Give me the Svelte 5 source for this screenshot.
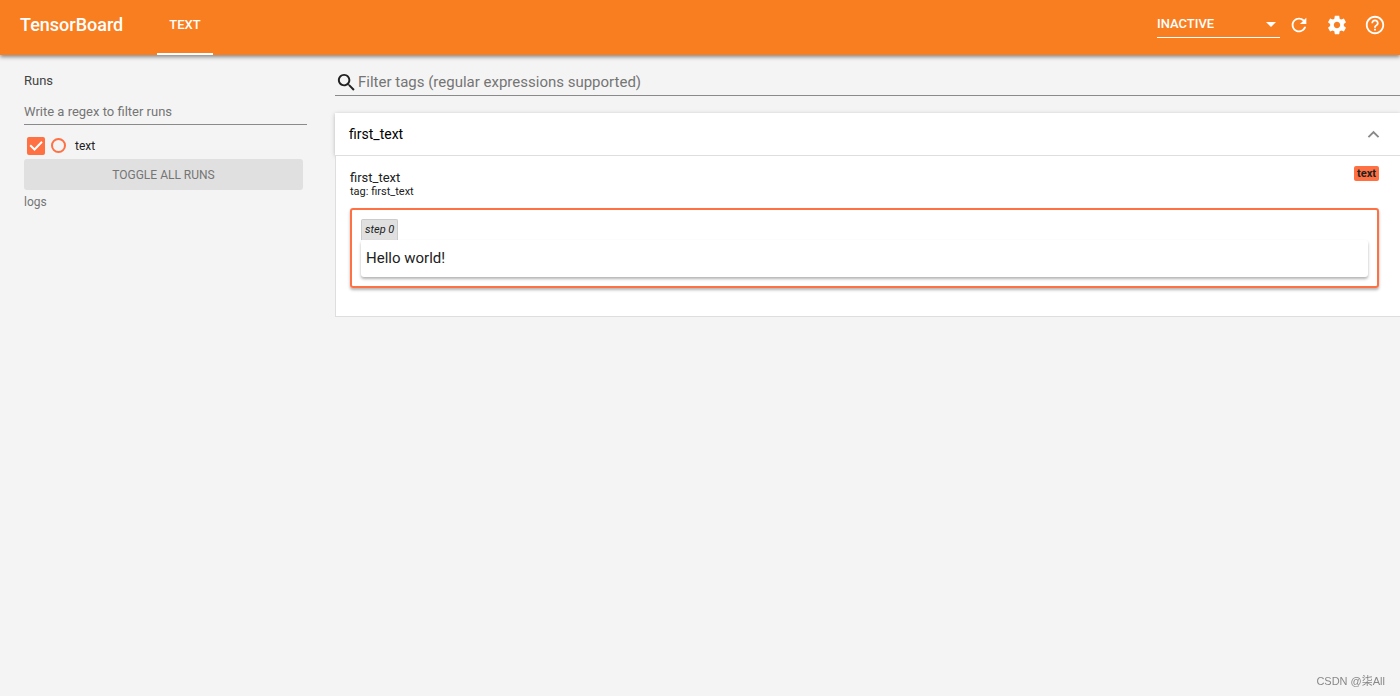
<!--
	Text dashboard: toolbar on top, run selector on the left, tag filter and the
	collapsible tag groups on the right.
-->
<script lang="ts">
	interface TextEntry {
		step: number;
		text: string;
	}

	interface TagCard {
		tag: string;
		run: string;
		entries: TextEntry[];
	}

	const modes = ['INACTIVE', 'TEXT'];

	const cards: TagCard[] = [{ tag: 'first_text', run: 'text', entries: [{ step: 0, text: 'Hello world!' }] }];

	let mode = $state('INACTIVE');
	let runs = $state([{ name: 'text', checked: true }]);
	let runFilter = $state('');
	let tagFilter = $state('');
	let paneOpen = $state(true);

	// A half-typed expression is often invalid; treat it as matching everything.
	function matches(value: string, pattern: string): boolean {
		try {
			return new RegExp(pattern).test(value);
		} catch {
			return true;
		}
	}

	const visibleRuns = $derived(runs.filter((run) => matches(run.name, runFilter)));
	const visibleCards = $derived(
		cards.filter((card) => matches(card.tag, tagFilter) && runs.some((run) => run.name === card.run && run.checked))
	);

	function toggleAllRuns(): void {
		const checked = !runs.some((run) => run.checked);
		for (const run of runs) {
			run.checked = checked;
		}
	}

	function selectOnly(name: string): void {
		for (const run of runs) {
			run.checked = run.name === name;
		}
	}
</script>

<div class="page">
	<header class="toolbar">
		<div class="brand">TensorBoard</div>
		<nav class="tabs">
			<a class="tab" href="#text" aria-current="page">TEXT</a>
		</nav>

		<div class="actions">
			<div class="mode">
				<select aria-label="Inactive dashboards" bind:value={mode}>
					{#each modes as option}
						<option value={option}>{option}</option>
					{/each}
				</select>
				<svg class="mode-arrow" viewBox="0 0 10 5" aria-hidden="true"><path d="M0 0h10L5 5z" /></svg>
			</div>
			<button type="button" class="icon-button" aria-label="Reload">
				<svg viewBox="0 0 24 24" aria-hidden="true">
					<path
						d="M17.65 6.35C16.2 4.9 14.21 4 12 4c-4.42 0-7.99 3.58-7.99 8s3.57 8 7.99 8c3.73 0 6.84-2.55 7.73-6h-2.08c-.82 2.33-3.04 4-5.65 4-3.31 0-6-2.69-6-6s2.69-6 6-6c1.66 0 3.14.69 4.22 1.78L13 11h7V4l-2.35 2.35z"
					/>
				</svg>
			</button>
			<button type="button" class="icon-button" aria-label="Settings">
				<svg viewBox="0 0 24 24" aria-hidden="true">
					<path
						d="M19.43 12.98c.04-.32.07-.64.07-.98s-.03-.66-.07-.98l2.11-1.65c.19-.15.24-.42.12-.64l-2-3.46c-.12-.22-.39-.3-.61-.22l-2.49 1c-.52-.4-1.08-.73-1.69-.98l-.38-2.65C14.46 2.18 14.25 2 14 2h-4c-.25 0-.46.18-.49.42l-.38 2.65c-.61.25-1.17.59-1.69.98l-2.49-1c-.23-.09-.49 0-.61.22l-2 3.46c-.13.22-.07.49.12.64l2.11 1.65c-.04.32-.07.65-.07.98s.03.66.07.98l-2.11 1.65c-.19.15-.24.42-.12.64l2 3.46c.12.22.39.3.61.22l2.49-1c.52.4 1.08.73 1.69.98l.38 2.65c.03.24.24.42.49.42h4c.25 0 .46-.18.49-.42l.38-2.65c.61-.25 1.17-.59 1.69-.98l2.49 1c.23.09.49 0 .61-.22l2-3.46c.12-.22.07-.49-.12-.64l-2.11-1.65zM12 15.5c-1.93 0-3.5-1.57-3.5-3.5s1.57-3.5 3.5-3.5 3.5 1.57 3.5 3.5-1.57 3.5-3.5 3.5z"
					/>
				</svg>
			</button>
			<a class="icon-button" href="#help" aria-label="Help">
				<svg viewBox="0 0 24 24" aria-hidden="true">
					<path
						d="M11 18h2v-2h-2v2zm1-16C6.48 2 2 6.48 2 12s4.48 10 10 10 10-4.48 10-10S17.52 2 12 2zm0 18c-4.41 0-8-3.59-8-8s3.59-8 8-8 8 3.59 8 8-3.59 8-8 8zm0-14c-2.21 0-4 1.79-4 4h2c0-1.1.9-2 2-2s2 .9 2 2c0 2-3 1.75-3 5h2c0-2.25 3-2.5 3-5 0-2.21-1.79-4-4-4z"
					/>
				</svg>
			</a>
		</div>
	</header>

	<div class="dashboard">
		<aside class="sidebar">
			<h2 class="sidebar-title">Runs</h2>
			<input
				class="run-filter"
				type="text"
				placeholder="Write a regex to filter runs"
				aria-label="Write a regex to filter runs"
				bind:value={runFilter}
			/>
			<ul class="runs">
				{#each visibleRuns as run (run.name)}
					<li class="run">
						<input id={`run-${run.name}`} class="run-check" type="checkbox" bind:checked={run.checked} />
						<button type="button" class="isolate" aria-label={`Show only ${run.name}`} onclick={() => selectOnly(run.name)}
						></button>
						<label for={`run-${run.name}`}>{run.name}</label>
					</li>
				{/each}
			</ul>
			<button type="button" class="toggle-all" onclick={toggleAllRuns}>TOGGLE ALL RUNS</button>
			<div class="logdir">logs</div>
		</aside>

		<main class="center">
			<label class="tag-filter">
				<svg viewBox="0 0 24 24" aria-hidden="true">
					<path
						d="M15.5 14h-.79l-.28-.27C15.41 12.59 16 11.11 16 9.5 16 5.91 13.09 3 9.5 3S3 5.91 3 9.5 5.91 16 9.5 16c1.61 0 3.09-.59 4.23-1.57l.27.28v.79l5 4.99L20.49 19l-4.99-5zm-6 0C7.01 14 5 11.99 5 9.5S7.01 5 9.5 5 14 7.01 14 9.5 11.99 14 9.5 14z"
					/>
				</svg>
				<input
					type="text"
					placeholder="Filter tags (regular expressions supported)"
					aria-label="Filter tags"
					bind:value={tagFilter}
				/>
			</label>

			<section class="pane">
				<button type="button" class="pane-header" aria-expanded={paneOpen} onclick={() => (paneOpen = !paneOpen)}>
					<span>first_text</span>
					<svg class:collapsed={!paneOpen} viewBox="0 0 24 24" aria-hidden="true">
						<path d="M12 8l-6 6 1.41 1.41L12 10.83l4.59 4.58L18 14z" />
					</svg>
				</button>

				{#if paneOpen}
					<div class="pane-body">
						{#each visibleCards as card (card.tag)}
							<article class="card">
								<div class="card-heading">
									<div>
										<h3 class="card-title">{card.tag}</h3>
										<div class="card-tag">tag: {card.tag}</div>
									</div>
									<span class="run-badge">{card.run}</span>
								</div>
								<div class="entries">
									{#each card.entries as entry (entry.step)}
										<div class="step">step {entry.step}</div>
										<p class="entry-text">{entry.text}</p>
									{/each}
								</div>
							</article>
						{/each}
					</div>
				{/if}
			</section>
		</main>
	</div>

	<div class="watermark">CSDN @柒All</div>
</div>

<style>
	:global(body) {
		background: #f4f4f4;
	}

	.page {
		--run-color: #ff7043;
		display: flex;
		flex-direction: column;
		min-height: 100vh;
		background: #f4f4f4;
		color: #212121;
		font-family: Roboto, 'Noto Sans CJK SC', sans-serif;
		font-size: 13px;
	}

	.page *,
	.page {
		box-sizing: border-box;
	}

	button,
	input,
	select {
		margin: 0;
		font-family: inherit;
	}

	.toolbar {
		position: relative;
		display: flex;
		height: 55px;
		padding: 0 14px 0 20px;
		background: #f97e1f;
		box-shadow: 0 2px 4px rgba(0, 0, 0, 0.45);
		color: #fff;
	}

	.brand {
		margin-right: 34px;
		font-size: 18px;
		font-weight: 500;
		line-height: 49px;
	}

	.tabs {
		display: flex;
	}

	.tab {
		padding: 0 12px;
		border-bottom: 2px solid #fff;
		color: inherit;
		font-weight: 500;
		line-height: 49px;
		text-decoration: none;
	}

	.actions {
		display: flex;
		align-items: center;
		gap: 16px;
		height: 50px;
		margin-left: auto;
	}

	.mode {
		position: relative;
		display: flex;
		align-self: flex-start;
		width: 123px;
		height: 28px;
		margin: 10px -8px 0 0;
		border-bottom: 1px solid #fff;
	}

	.mode select {
		width: 100%;
		padding: 0;
		border: 0;
		background: none;
		color: inherit;
		font-size: 13px;
		font-weight: 500;
		appearance: none;
		cursor: pointer;
	}

	.mode option {
		color: #212121;
	}

	.mode-arrow {
		position: absolute;
		top: 12px;
		right: 4px;
		width: 10px;
		height: 5px;
		fill: currentColor;
		pointer-events: none;
	}

	.icon-button {
		display: flex;
		padding: 0;
		border: 0;
		background: none;
		color: inherit;
		cursor: pointer;
	}

	.icon-button svg {
		width: 22px;
		height: 22px;
		fill: currentColor;
	}

	.dashboard {
		display: flex;
		flex: 1;
	}

	.sidebar {
		flex: 0 0 335px;
		padding: 16px 28px 0 24px;
	}

	.sidebar-title {
		margin: 0;
		color: #424242;
		font-size: 13px;
		font-weight: 400;
		line-height: 20px;
	}

	.run-filter {
		display: block;
		width: 100%;
		height: 26px;
		margin-top: 8px;
		padding: 0;
		border: 0;
		border-bottom: 1px solid #8a8a8a;
		outline: 0;
		background: none;
		color: inherit;
		font-size: 13px;
	}

	.run-filter::placeholder,
	.tag-filter input::placeholder {
		color: #757575;
		opacity: 1;
	}

	.runs {
		margin: 12px 0 5px;
		padding: 0 0 0 3px;
		list-style: none;
	}

	.run {
		display: flex;
		align-items: center;
		height: 17px;
	}

	.run label {
		margin-left: 9px;
		font-size: 12px;
		line-height: 16px;
	}

	.run-check {
		width: 18px;
		height: 18px;
		border: 0;
		border-radius: 2px;
		box-shadow: inset 0 0 0 2px var(--run-color);
		appearance: none;
		cursor: pointer;
	}

	.run-check:checked {
		background: var(--run-color)
			url("data:image/svg+xml,%3Csvg xmlns='http://www.w3.org/2000/svg' viewBox='0 0 18 18'%3E%3Cpath d='M3.2 8.3l4.3 4.2L15 4.8' fill='none' stroke='white' stroke-width='2'/%3E%3C/svg%3E")
			center / 18px 18px no-repeat;
		box-shadow: none;
	}

	.isolate {
		width: 15px;
		height: 15px;
		margin-left: 6px;
		padding: 0;
		border: 2px solid var(--run-color);
		border-radius: 50%;
		background: none;
		cursor: pointer;
	}

	.toggle-all {
		display: block;
		width: calc(100% - 4px);
		height: 31px;
		padding: 0;
		border: 0;
		border-radius: 3px;
		background: #e0e0e0;
		color: #757575;
		font-size: 12px;
		cursor: pointer;
	}

	.logdir {
		margin-top: 4px;
		color: #757575;
		font-size: 12px;
		line-height: 16px;
	}

	.center {
		flex: 1;
		min-width: 0;
		padding-top: 14px;
	}

	.tag-filter {
		display: flex;
		align-items: center;
		height: 27px;
		border-bottom: 1px solid #8a8a8a;
	}

	.tag-filter svg {
		width: 23px;
		height: 23px;
		fill: #212121;
	}

	.tag-filter input {
		flex: 1;
		padding: 0;
		border: 0;
		outline: 0;
		background: none;
		color: inherit;
		font-size: 15px;
	}

	.pane {
		margin-top: 17px;
	}

	.pane-header {
		display: flex;
		align-items: center;
		justify-content: space-between;
		width: 100%;
		height: 42px;
		padding: 0 15px 0 14px;
		border: 0;
		background: #fff;
		box-shadow: 0 1px 4px rgba(0, 0, 0, 0.25);
		color: #000;
		font-size: 14px;
		cursor: pointer;
	}

	.pane-header svg {
		width: 23px;
		height: 23px;
		fill: #8a8a8a;
	}

	.pane-header svg.collapsed {
		transform: rotate(180deg);
	}

	.pane-body {
		position: relative;
		padding: 10px 21px 28px 14px;
		border: 1px solid #dedede;
		border-right: 0;
		background: #fff;
	}

	.card-heading {
		display: flex;
		align-items: flex-start;
		justify-content: space-between;
	}

	.card-title {
		margin: 4px 0 0;
		font-size: 13px;
		font-weight: 400;
		line-height: 15px;
	}

	.card-tag {
		font-size: 11px;
		line-height: 13px;
	}

	.run-badge {
		padding: 0 3px;
		border-radius: 2px;
		background: var(--run-color);
		font-size: 11px;
		font-weight: 700;
		line-height: 15px;
	}

	.entries {
		margin-top: 10px;
		padding: 9px;
		border: 2px solid var(--run-color);
		border-radius: 3px;
		box-shadow: 0 2px 3px rgba(0, 0, 0, 0.3);
	}

	.step {
		width: max-content;
		padding: 0 3px;
		border: 1px solid #ccc;
		border-bottom: 0;
		border-radius: 2px 2px 0 0;
		background: #e0e0e0;
		font-size: 11px;
		font-style: italic;
		line-height: 20px;
	}

	.entry-text {
		margin: 0;
		padding: 8px 5px 9px;
		border-radius: 3px;
		background: #fff;
		box-shadow: 0 2px 3px rgba(0, 0, 0, 0.3);
		font-size: 15px;
		line-height: 20px;
	}

	.watermark {
		position: fixed;
		right: 15px;
		bottom: 6px;
		color: #888;
		font-family: 'Liberation Sans', 'Noto Sans CJK SC', sans-serif;
		font-size: 11px;
		line-height: 18px;
	}
</style>
